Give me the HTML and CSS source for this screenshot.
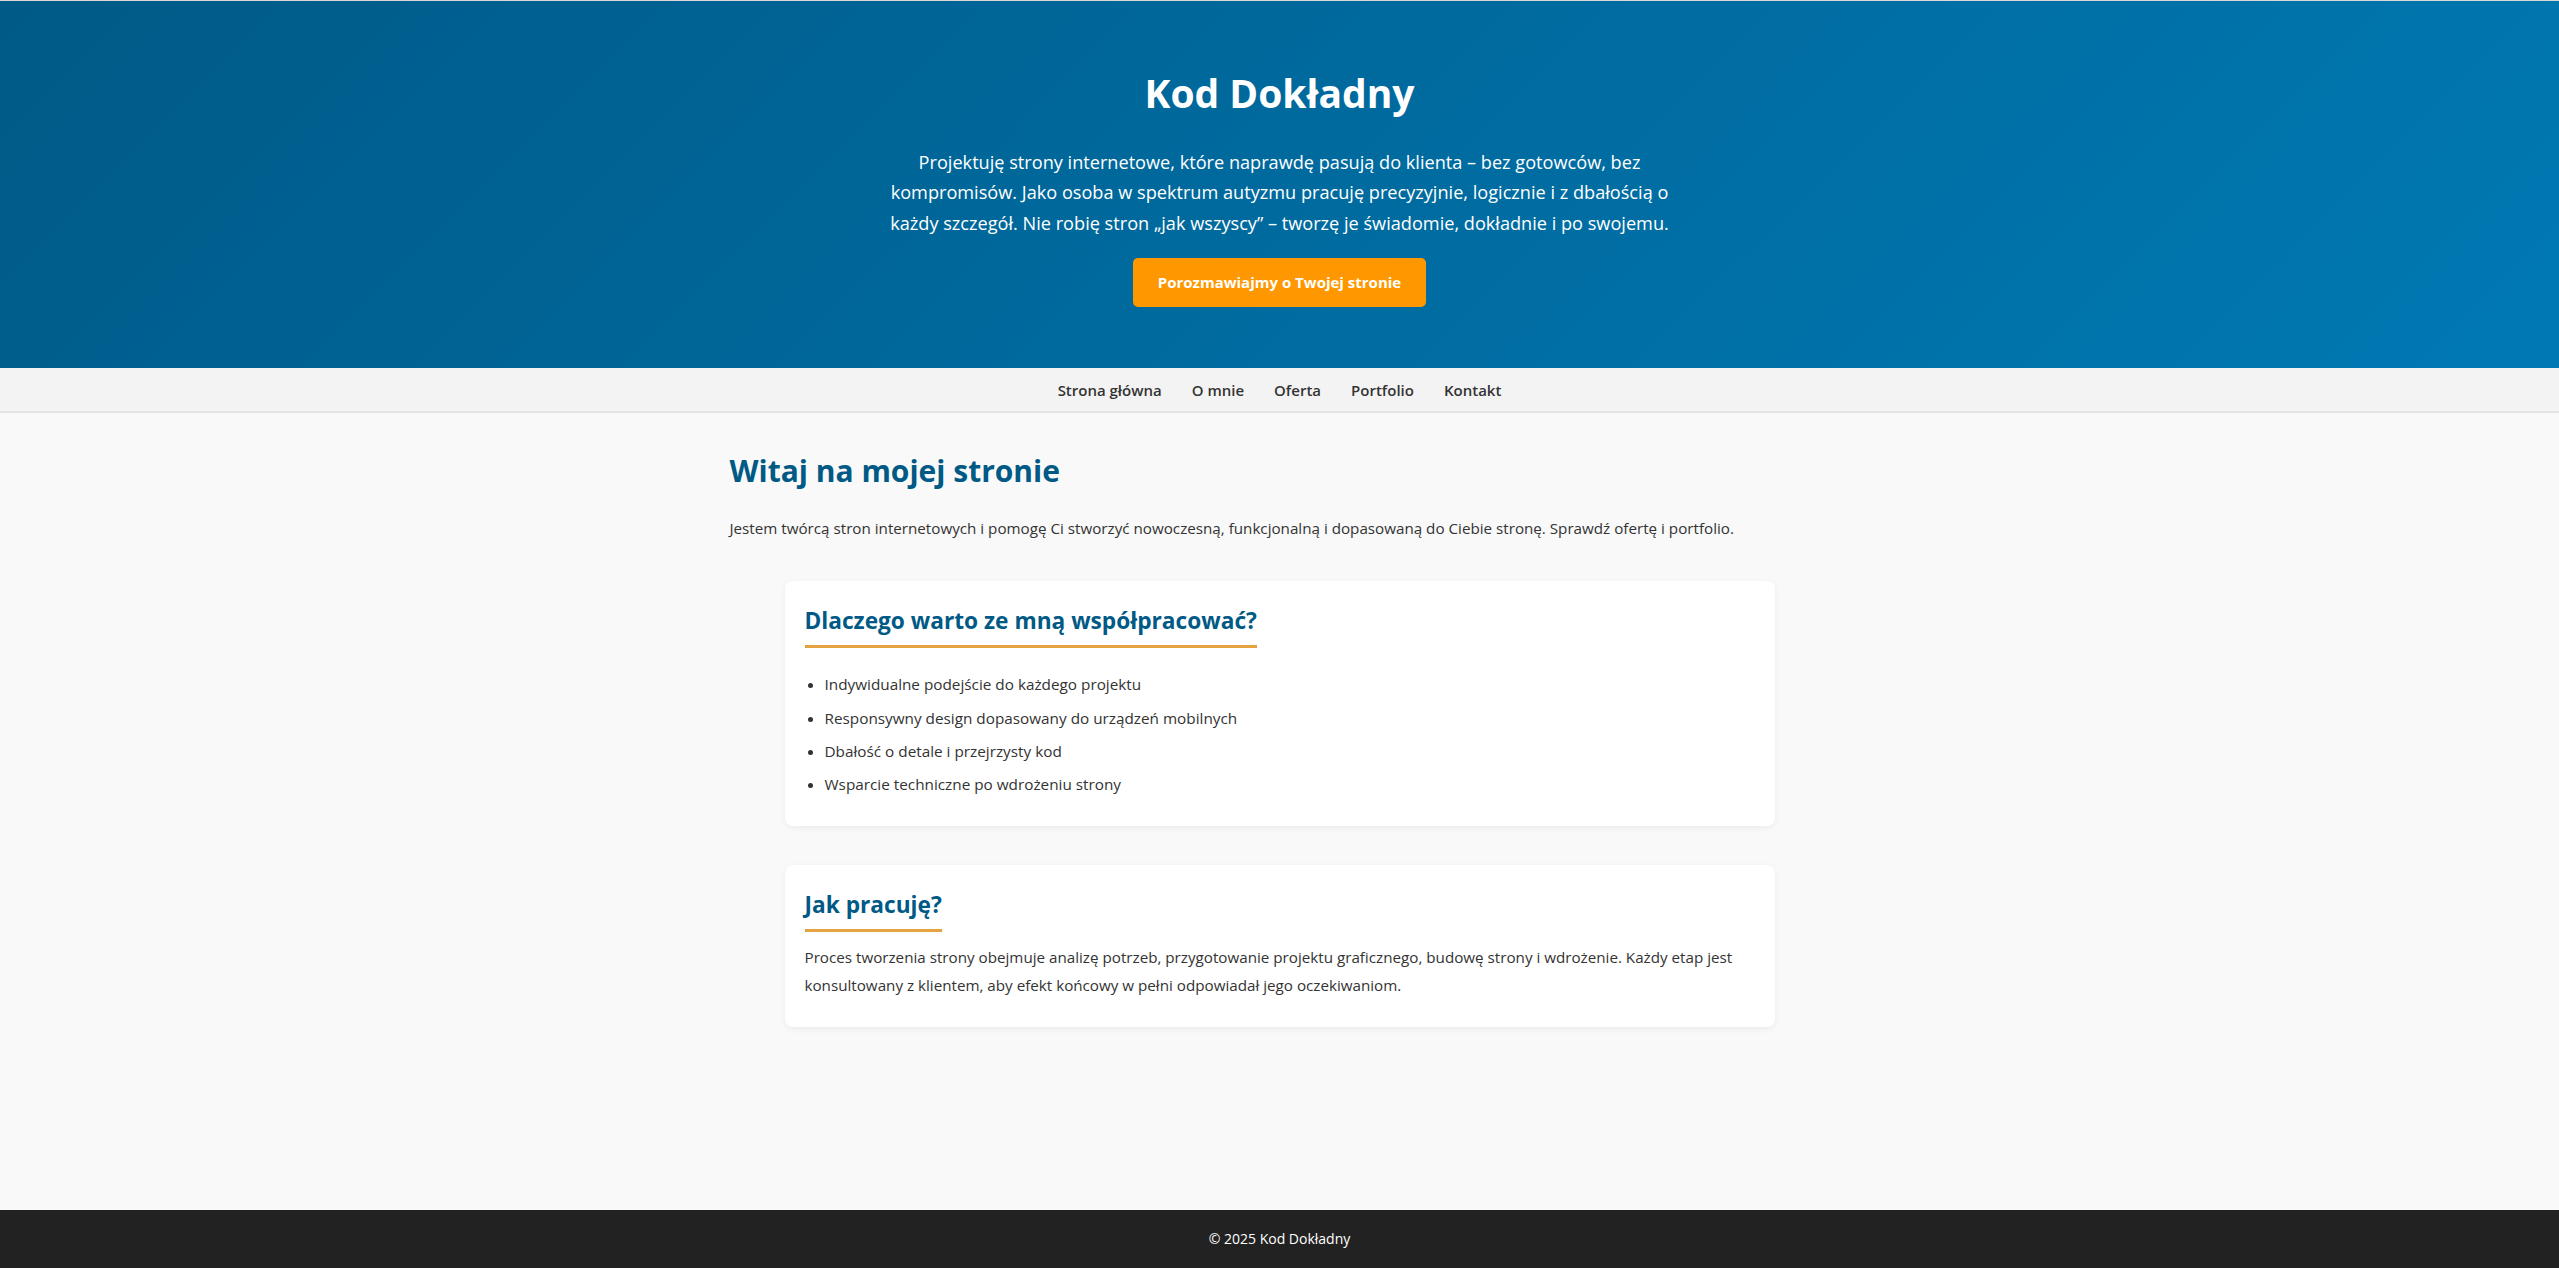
FILE: index.html
```html
<!DOCTYPE html>
<html lang="pl">
<head>
<meta charset="utf-8">
<title>Kod Dokładny</title>
<link rel="stylesheet" href="styles.css">
</head>
<body>
<header class="hero">
  <h1 class="hero-title">Kod Dokładny</h1>
  <p class="hero-text">Projektuję strony internetowe, które naprawdę pasują do klienta – bez gotowców, bez kompromisów. Jako osoba w spektrum autyzmu pracuję precyzyjnie, logicznie i z dbałością o każdy szczegół. Nie robię stron „jak wszyscy” – tworzę je świadomie, dokładnie i po swojemu.</p>
  <a class="hero-btn" href="#kontakt">Porozmawiajmy o Twojej stronie</a>
</header>
<nav class="nav">
  <a href="#">Strona główna</a>
  <a href="#">O mnie</a>
  <a href="#">Oferta</a>
  <a href="#">Portfolio</a>
  <a href="#">Kontakt</a>
</nav>
<main class="main">
  <h2 class="page-title">Witaj na mojej stronie</h2>
  <p class="intro">Jestem twórcą stron internetowych i pomogę Ci stworzyć nowoczesną, funkcjonalną i dopasowaną do Ciebie stronę. Sprawdź ofertę i portfolio.</p>
  <section class="card">
    <h3 class="card-title">Dlaczego warto ze mną współpracować?</h3>
    <ul class="card-list">
      <li>Indywidualne podejście do każdego projektu</li>
      <li>Responsywny design dopasowany do urządzeń mobilnych</li>
      <li>Dbałość o detale i przejrzysty kod</li>
      <li>Wsparcie techniczne po wdrożeniu strony</li>
    </ul>
  </section>
  <section class="card">
    <h3 class="card-title">Jak pracuję?</h3>
    <p class="card-text">Proces tworzenia strony obejmuje analizę potrzeb, przygotowanie projektu graficznego, budowę strony i wdrożenie. Każdy etap jest konsultowany z klientem, aby efekt końcowy w pełni odpowiadał jego oczekiwaniom.</p>
  </section>
</main>
<footer class="footer">© 2025 Kod Dokładny</footer>
</body>
</html>
```
FILE: styles.css
```css
* { box-sizing: border-box; }
html, body { margin: 0; padding: 0; }
body {
  font-family: "Open Sans", "Noto Sans", sans-serif;
  color: #333;
  background: #f9f9f9;
  min-height: 100vh;
  display: flex;
  flex-direction: column;
  border-top: 1px solid #ddd6d6;
}
.hero {
  background: linear-gradient(135deg, #005a87 0%, #006a9e 50%, #0079b3 100%);
  color: #fff;
  text-align: center;
  padding: 68px 20px 61px;
}
.hero-title {
  margin: 0 0 29.5px;
  font-size: 39px;
  line-height: 48px;
  font-weight: 700;
}
.hero-text {
  max-width: 800px;
  margin: 0 auto 20px;
  font-size: 18.15px;
  line-height: 30.5px;
}
.hero-btn {
  display: inline-block;
  background: #ff9800;
  color: #fff;
  text-decoration: none;
  font-weight: 700;
  font-size: 15px;
  line-height: 21px;
  padding: 14px 25px;
  border-radius: 5px;
}
.nav {
  background: #f3f3f3;
  border-bottom: 2px solid #e4e4e4;
  display: flex;
  justify-content: center;
  gap: 30px;
  padding: 12px 0 10px;
}
.nav a {
  color: #333;
  text-decoration: none;
  font-weight: 600;
  font-size: 15px;
  line-height: 21px;
}
.main {
  flex: 1;
  width: 100%;
  max-width: 1100px;
  margin: 0 auto;
  padding-top: 37.6px;
}
.page-title {
  margin: 0 0 24.6px;
  font-size: 30px;
  line-height: 40px;
  color: #005a85;
}
.intro {
  margin: 0 0 38.6px;
  font-size: 15.2px;
  line-height: 27.2px;
}
.card {
  width: 90%;
  margin: 0 auto 39px;
  background: #fff;
  border-radius: 8px;
  box-shadow: 0 2px 6px rgba(0, 0, 0, 0.06);
  padding: 24px 20px 22px;
}
.card-title {
  display: inline-block;
  margin: 0;
  font-size: 22.7px;
  line-height: 32px;
  color: #005a85;
  padding-bottom: 8px;
  border-bottom: 3px solid #e4a340;
}
.card-list {
  margin: 23.5px 0 0;
  padding-left: 20px;
  font-size: 15.3px;
  line-height: 27.2px;
}
.card-list li { margin-bottom: 6px; }
.card-text {
  margin: 12.2px 0 6px;
  font-size: 15.2px;
  line-height: 27.2px;
}
.footer {
  background: #222;
  color: #fff;
  text-align: center;
  font-size: 14px;
  line-height: 22px;
  padding: 18px 20px;
}
```
